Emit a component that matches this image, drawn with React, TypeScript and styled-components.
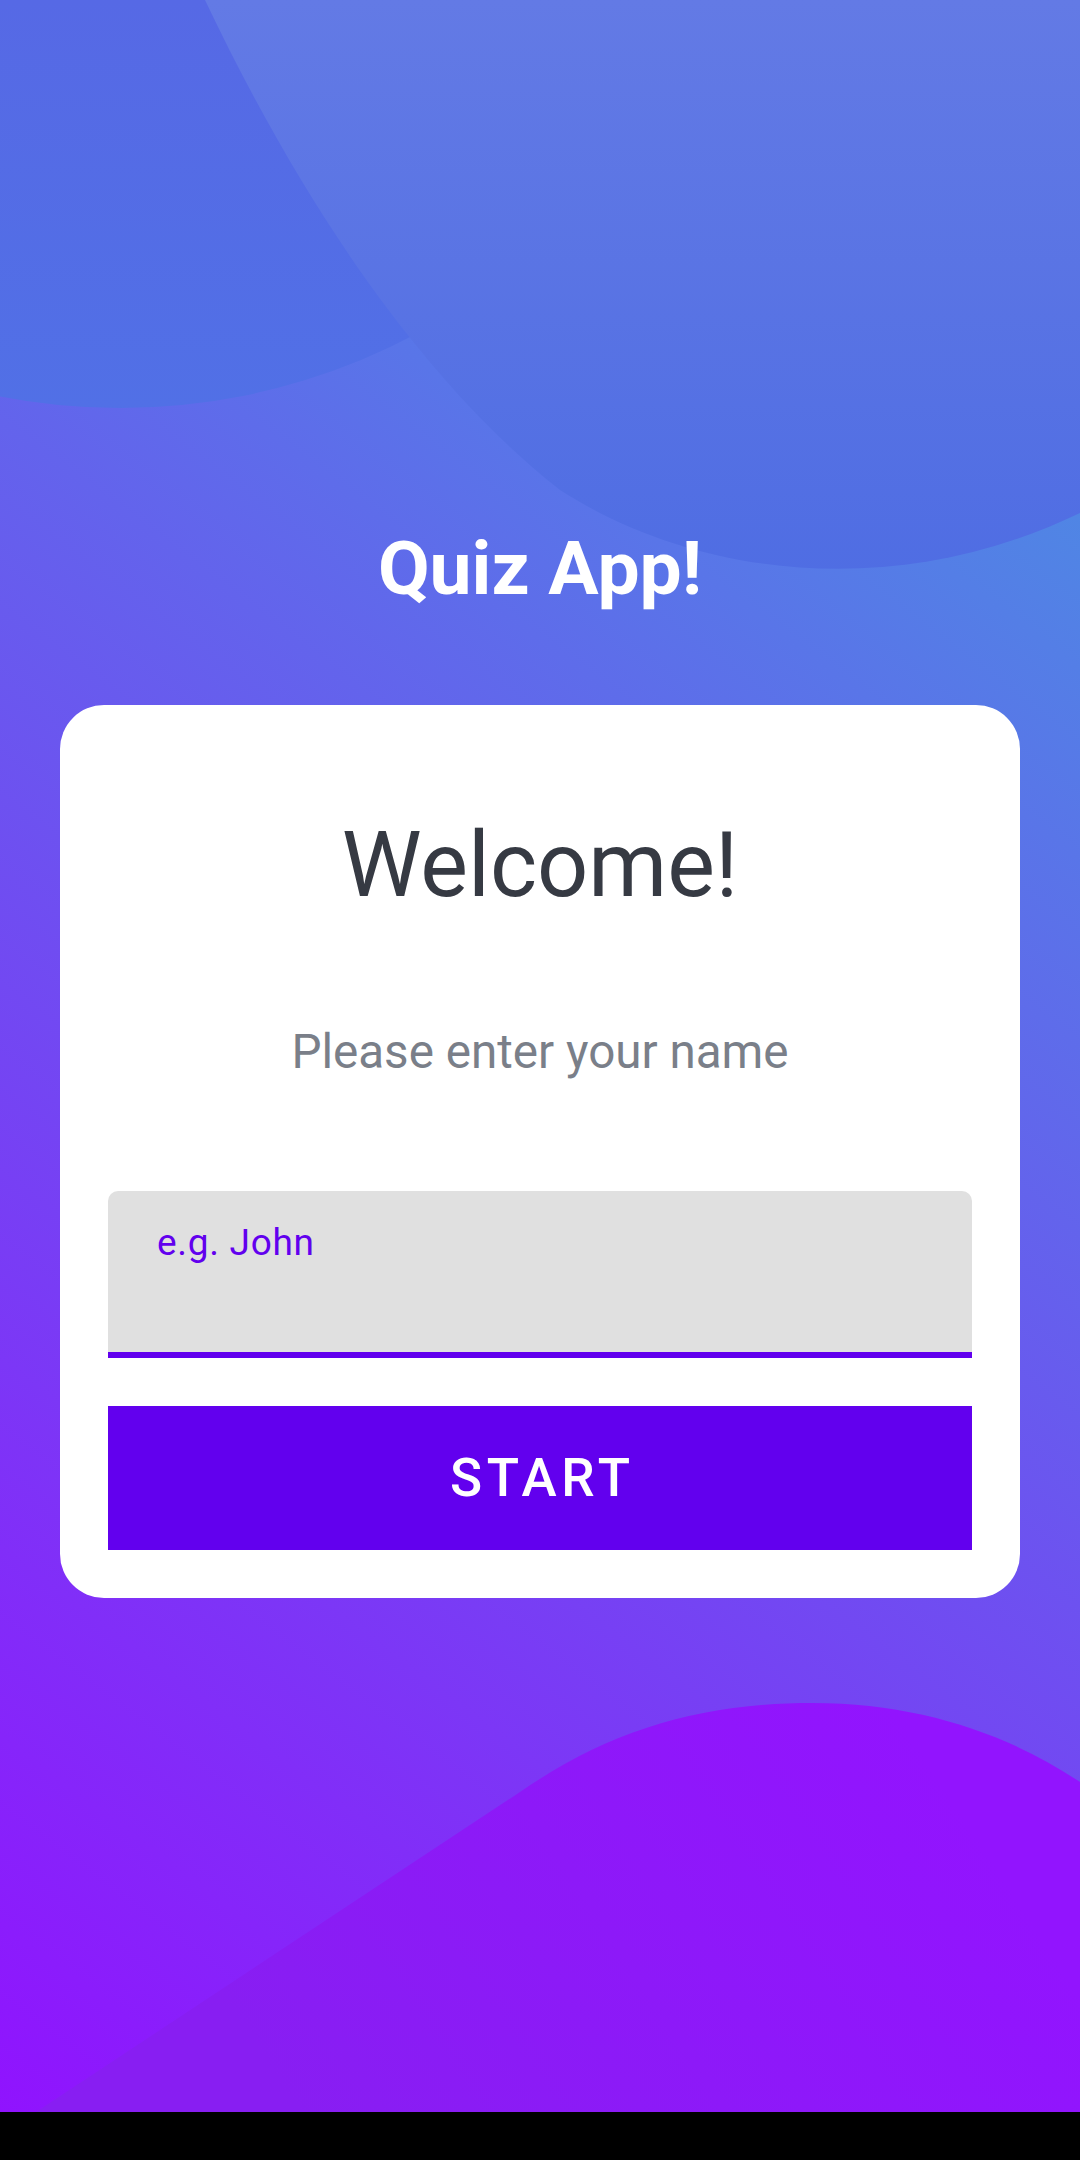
import React from "react";
import styled, { createGlobalStyle } from "styled-components";

const GlobalStyle = createGlobalStyle`
  html, body {
    margin: 0;
    padding: 0;
    background: #000000;
  }
  body {
    font-family: Roboto, "Noto Sans", "Liberation Sans", sans-serif;
    -webkit-font-smoothing: antialiased;
  }
  * { box-sizing: border-box; }
`;

const Page = styled.div`
  width: 1080px;
  height: 2160px;
  display: flex;
  flex-direction: column;
  overflow: hidden;
`;

const Screen = styled.main`
  position: relative;
  flex: 0 0 2112px;
  display: flex;
  flex-direction: column;
  align-items: center;
  background: linear-gradient(37deg, #9013fe 0%, #4a90e2 90%, #4a90e2 100%);
  overflow: hidden;
`;

const Decor = styled.svg`
  position: absolute;
  inset: 0;
  width: 100%;
  height: 100%;
  z-index: 0;
  pointer-events: none;
`;

const Content = styled.div`
  position: relative;
  z-index: 1;
  display: flex;
  flex-direction: column;
  align-items: center;
  padding-top: 531px;
  width: 100%;
`;

const Title = styled.h1`
  margin: 0;
  font-family: Roboto, "Liberation Sans", sans-serif;
  font-weight: 700;
  font-size: 75px;
  line-height: 75px;
  color: #ffffff;
  text-align: center;
`;

const Card = styled.section`
  margin-top: 99px;
  width: 960px;
  background: #ffffff;
  border-radius: 44px;
  padding: 116px 48px 48px;
  display: flex;
  flex-direction: column;
  align-items: stretch;
`;

const Heading = styled.h2`
  margin: 0;
  font-family: Roboto, "Liberation Sans", sans-serif;
  font-weight: 400;
  font-size: 90px;
  line-height: 90px;
  color: #363a43;
  text-align: center;
`;

const Subtitle = styled.p`
  margin: 118px 0 0;
  font-family: Roboto, "Liberation Sans", sans-serif;
  font-weight: 400;
  font-size: 47.6px;
  line-height: 47px;
  color: #7a7f89;
  text-align: center;
`;

const NameInput = styled.input`
  margin-top: 115px;
  display: block;
  width: 100%;
  height: 167px;
  padding: 33px 48px 91px 49px;
  border: none;
  border-bottom: 6px solid #6200ee;
  border-radius: 10px 10px 0 0;
  background: #e0e0e0;
  font-family: Roboto, "Liberation Sans", sans-serif;
  font-size: 37px;
  line-height: 37px;
  letter-spacing: 0.7px;
  color: #222222;
  outline: none;

  &::placeholder {
    color: #6200ee;
    opacity: 1;
  }
`;

const StartButton = styled.button`
  margin-top: 48px;
  height: 144px;
  width: 100%;
  border: none;
  border-radius: 0;
  background: #6200ee;
  color: #ffffff;
  font-family: Roboto, "Liberation Sans", sans-serif;
  font-weight: 500;
  font-size: 53px;
  letter-spacing: 0.09em;
  padding: 0 0 0 0.09em;
  text-transform: uppercase;
  cursor: pointer;
`;

const NavBar = styled.div`
  flex: 0 0 48px;
  background: #000000;
`;

const Background: React.FC = () => (
  <Decor viewBox="0 0 1080 2112" preserveAspectRatio="none" aria-hidden="true">
    <defs>
      <linearGradient id="gA" gradientUnits="userSpaceOnUse" x1="0" y1="0" x2="0" y2="410">
        <stop offset="0" stopColor="#5669e5" />
        <stop offset="1" stopColor="#5170e6" />
      </linearGradient>
      <linearGradient id="gB" gradientUnits="userSpaceOnUse" x1="0" y1="0" x2="0" y2="580">
        <stop offset="0" stopColor="#637ae5" />
        <stop offset="1" stopColor="#4f6de3" />
      </linearGradient>
      <linearGradient id="gW" gradientUnits="userSpaceOnUse" x1="900" y1="1720" x2="300" y2="2112">
        <stop offset="0" stopColor="#9214fe" />
        <stop offset="1" stopColor="#881ef2" />
      </linearGradient>
    </defs>
    <circle cx="120" cy="-222" r="630" fill="url(#gA)" />
    <path
      d="M205 0 C300 200 420 380 560 490 C700 580 900 600 1080 513 L1080 0 Z"
      fill="url(#gB)"
    />
    <path
      d="M36 2112 L520 1792 C610 1730 700 1703 813 1703 C920 1703 1010 1735 1080 1782 L1080 2112 Z"
      fill="url(#gW)"
    />
  </Decor>
);

export default function App() {
  return (
    <>
      <GlobalStyle />
      <Page>
        <Screen>
          <Background />
          <Content>
            <Title>Quiz App!</Title>
            <Card>
              <Heading>Welcome!</Heading>
              <Subtitle>Please enter your name</Subtitle>
              <NameInput type="text" placeholder="e.g. John" />
              <StartButton type="button">Start</StartButton>
            </Card>
          </Content>
        </Screen>
        <NavBar />
      </Page>
    </>
  );
}
